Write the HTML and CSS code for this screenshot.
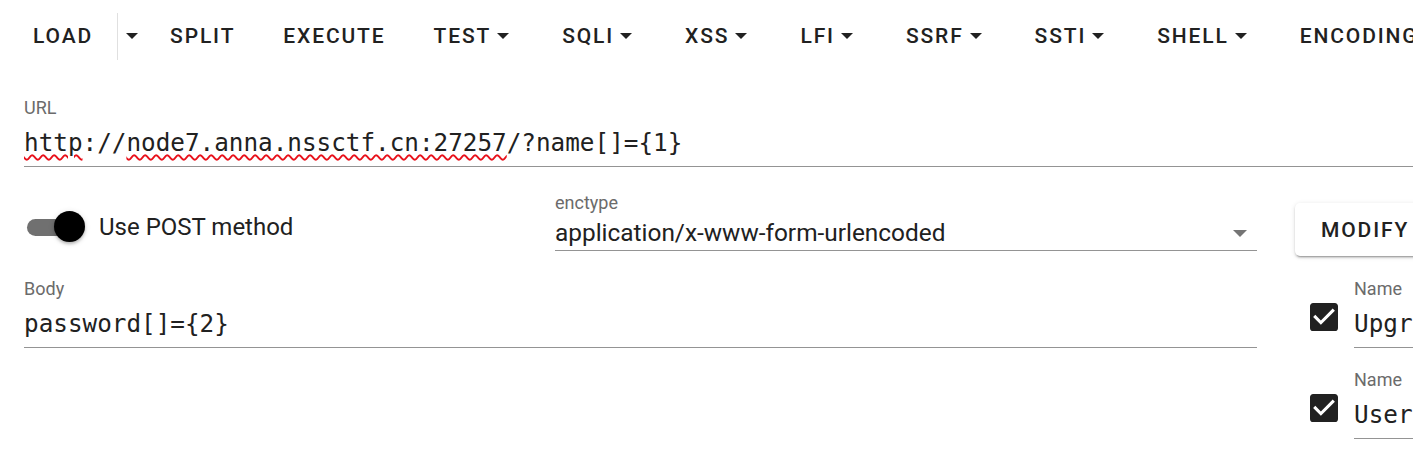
FILE: index.html
```html
<!DOCTYPE html>
<html>
<head>
<meta charset="utf-8">
<link rel="stylesheet" href="styles.css">
</head>
<body>
<nav class="toolbar">
  <div class="btn">LOAD</div>
  <div class="sep"></div>
  <div class="btn btn-arrow"><span class="caret"></span></div>
  <div class="btn">SPLIT</div>
  <div class="btn">EXECUTE</div>
  <div class="btn">TEST<span class="caret"></span></div>
  <div class="btn">SQLI<span class="caret"></span></div>
  <div class="btn">XSS<span class="caret"></span></div>
  <div class="btn">LFI<span class="caret"></span></div>
  <div class="btn">SSRF<span class="caret"></span></div>
  <div class="btn">SSTI<span class="caret"></span></div>
  <div class="btn">SHELL<span class="caret"></span></div>
  <div class="btn">ENCODING<span class="caret"></span></div>
</nav>
<main class="panel">
  <div class="field url-field">
    <div class="label">URL</div>
    <div class="value mono"><span class="spell">http</span>://<span class="spell">node7.anna.nssctf.cn:27257</span>/?name[]={1}</div>
  </div>
  <div class="lower">
    <div class="left">
      <div class="row2">
        <div class="switch-wrap">
          <div class="switch"><div class="track"></div><div class="knob"></div></div>
          <span class="switch-label">Use POST method</span>
        </div>
        <div class="field select-field">
          <div class="label">enctype</div>
          <div class="value sans">application/x-www-form-urlencoded</div>
          <span class="select-arrow"></span>
        </div>
      </div>
      <div class="field body-field">
        <div class="label">Body</div>
        <div class="value mono">password[]={2}</div>
      </div>
    </div>
    <div class="right">
      <div class="modify">MODIFY</div>
      <div class="hrow">
        <svg class="cb" viewBox="3 3 18 18" width="28" height="28"><path fill="#212121" d="M19,3H5C3.89,3 3,3.9 3,5V19A2,2 0 0,0 5,21H19A2,2 0 0,0 21,19V5C21,3.89 20.1,3 19,3M10,17L5,12L6.41,10.58L10,14.17L17.59,6.58L19,8L10,17Z"/></svg>
        <div class="field hfield">
          <div class="label">Name</div>
          <div class="value mono">Upgrade-Insecure-Requests</div>
        </div>
      </div>
      <div class="hrow">
        <svg class="cb" viewBox="3 3 18 18" width="28" height="28"><path fill="#212121" d="M19,3H5C3.89,3 3,3.9 3,5V19A2,2 0 0,0 5,21H19A2,2 0 0,0 21,19V5C21,3.89 20.1,3 19,3M10,17L5,12L6.41,10.58L10,14.17L17.59,6.58L19,8L10,17Z"/></svg>
        <div class="field hfield">
          <div class="label">Name</div>
          <div class="value mono">User-Agent</div>
        </div>
      </div>
      <div class="hrow">
        <div class="field hfield nolabel">
          <div class="label">Name</div>
        </div>
      </div>
    </div>
  </div>
</main>
</body>
</html>
```
FILE: styles.css
```css
html, body {
  margin: 0;
  padding: 0;
  background: #fff;
  overflow: hidden;
}
body {
  width: 1700px;
  font-family: Roboto, "Liberation Sans", sans-serif;
  color: #212121;
}
.toolbar {
  display: flex;
  align-items: center;
  padding: 9px 0 0 9px;
  height: 54px;
}
.btn {
  height: 54px;
  padding: 0 24px;
  display: flex;
  align-items: center;
  font-size: 21px;
  font-weight: 500;
  letter-spacing: 1.87px;
  color: #212121;
  white-space: nowrap;
}
.sep {
  width: 1px;
  height: 47px;
  background: #e0e0e0;
}
.btn-arrow {
  width: 28px;
  padding: 0;
  justify-content: center;
}
.caret {
  display: inline-block;
  width: 0;
  height: 0;
  border-left: 6px solid transparent;
  border-right: 6px solid transparent;
  border-top: 6px solid #212121;
  margin: 0 5px 0 6px;
}
.btn-arrow .caret {
  margin: 0;
}
.panel {
  padding: 34px 0 0 24px;
}
.field {
  position: relative;
  border-bottom: 1px solid #949494;
}
.label {
  font-size: 18px;
  line-height: 22px;
  color: #6b6b6b;
  font-family: Roboto, sans-serif;
}
.value {
  line-height: 30px;
  white-space: nowrap;
  color: #212121;
}
.mono {
  font-family: "DejaVu Sans Mono", monospace;
  font-size: 24.3px;
  margin-top: 9px;
  padding-bottom: 8px;
}
.sans {
  font-family: Roboto, sans-serif;
  font-size: 24.4px;
  margin-top: 4px;
  padding-bottom: 2px;
}
.spell {
  text-decoration: underline wavy #e8101a;
  text-decoration-thickness: 1.5px;
  text-underline-offset: 3px;
}
.url-field {
  width: 1600px;
}
.lower {
  display: flex;
  margin-top: 25px;
}
.left {
  width: 1233px;
}
.row2 {
  display: flex;
  align-items: flex-start;
}
.switch-wrap {
  display: flex;
  align-items: center;
  width: 531px;
  margin-top: 20px;
  height: 30px;
}
.switch {
  position: relative;
  width: 60px;
  height: 30px;
  margin-left: 3px;
}
.track {
  position: absolute;
  left: 0;
  top: 7px;
  width: 54px;
  height: 17px;
  border-radius: 9px;
  background: #707070;
}
.knob {
  position: absolute;
  left: 27px;
  top: -1px;
  width: 31px;
  height: 31px;
  border-radius: 50%;
  background: #000;
  box-shadow: 0 2px 3px rgba(0,0,0,.22), 0 1px 6px rgba(0,0,0,.12);
}
.switch-label {
  margin-left: 12px;
  font-size: 24px;
  color: #212121;
}
.select-field {
  flex: 1;
}
.select-arrow {
  position: absolute;
  right: 10px;
  top: 38px;
  border-left: 7px solid transparent;
  border-right: 7px solid transparent;
  border-top: 7px solid #757575;
}
.body-field {
  margin-top: 27px;
}
.right {
  margin-left: 38px;
  width: 300px;
}
.modify {
  margin-top: 11px;
  height: 53px;
  width: 160px;
  display: flex;
  align-items: center;
  padding-left: 26px;
  box-sizing: border-box;
  font-size: 21px;
  font-weight: 500;
  letter-spacing: 1.87px;
  border-radius: 5px;
  background: #fff;
  box-shadow: 0 3px 1px -2px rgba(0,0,0,.2), 0 2px 2px 0 rgba(0,0,0,.14), 0 1px 5px 0 rgba(0,0,0,.12);
}
.hrow {
  display: flex;
  align-items: flex-start;
  margin-top: 21px;
}
.modify + .hrow {
  margin-top: 22px;
}
.cb {
  margin: 25px 0 0 15px;
  flex: none;
}
.hfield {
  margin-left: 16px;
  width: 250px;
}
.hrow .nolabel {
  margin-left: 59px;
  border-bottom: none;
}
```
